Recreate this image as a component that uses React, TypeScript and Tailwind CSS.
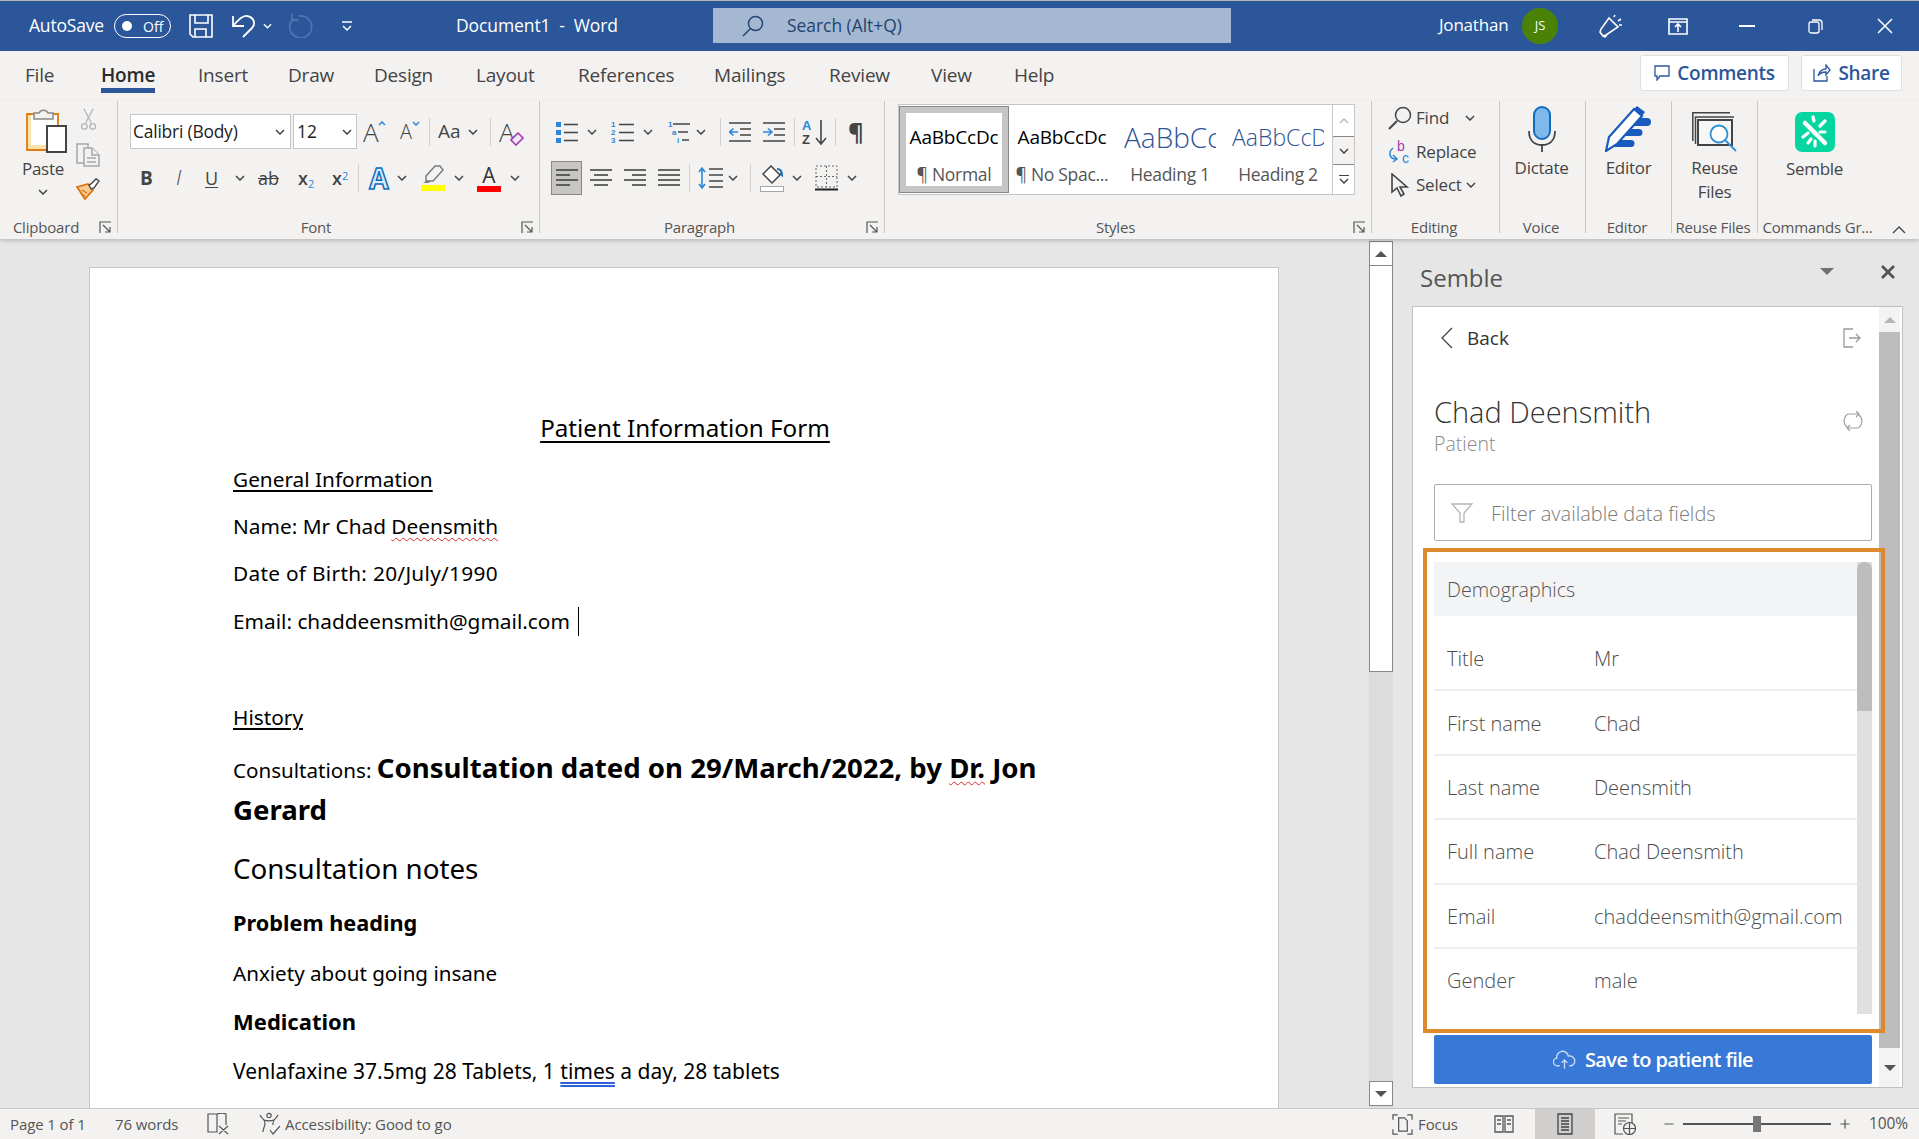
import { ReactNode } from "react"
import { Plus, Minus } from "lucide-react"

type IconProps = { className?: string }

const tabs = [
  { label: "File", w: 76 },
  { label: "Home", w: 97 },
  { label: "Insert", w: 90 },
  { label: "Draw", w: 86 },
  { label: "Design", w: 102 },
  { label: "Layout", w: 102 },
  { label: "References", w: 136 },
  { label: "Mailings", w: 115 },
  { label: "Review", w: 102 },
  { label: "View", w: 83 },
  { label: "Help", w: 60 },
]

function Chev({ className = "" }: IconProps) {
  return (
    <svg viewBox="0 0 10 6" className={`w-[10px] h-[6px] shrink-0 ${className}`} fill="none" stroke="#444" strokeWidth="1.5">
      <path d="M1 1l4 4 4-4" />
    </svg>
  )
}

function Launcher() {
  return (
    <svg viewBox="0 0 13 13" className="w-[13px] h-[13px] shrink-0" fill="none" stroke="#555" strokeWidth="1.2">
      <path d="M1 12V1h11M4 4l7 7M11 6v5H6" />
    </svg>
  )
}

function VSep({ h = 28, ml = 0 }: { h?: number; ml?: number }) {
  return <div className="w-px bg-[#d2d0ce] shrink-0" style={{ height: h, marginLeft: ml }} />
}

function AlignIcon({ widths }: { widths: string[] }) {
  return (
    <svg viewBox="0 0 22 22" className="w-[22px] h-[22px] shrink-0" stroke="#444" strokeWidth="1.6">
      {widths.map((d, i) => (
        <path key={i} d={d} />
      ))}
    </svg>
  )
}

function BulletIcon() {
  return (
    <svg viewBox="0 0 24 24" className="w-[24px] h-[24px] shrink-0" strokeWidth="1.6" stroke="#444">
      <rect x="1" y="2" width="5" height="5" fill="#2b88d8" stroke="none" />
      <rect x="1" y="10" width="5" height="5" fill="#2b88d8" stroke="none" />
      <rect x="1" y="18" width="5" height="5" fill="#2b88d8" stroke="none" />
      <path d="M9 4.500h14M9 12.500h14M9 20.500h14" />
    </svg>
  )
}

function NumberIcon() {
  return (
    <svg viewBox="0 0 25 24" className="w-[25px] h-[24px] shrink-0" strokeWidth="1.6" stroke="#444">
      <path d="M9 4.500h15M9 12.500h15M9 20.500h15" />
      <g fill="#2b88d8" stroke="none" fontSize="8" fontWeight="700" fontFamily="Liberation Sans">
        <text x="1" y="7">1</text>
        <text x="1" y="15">2</text>
        <text x="1" y="23">3</text>
      </g>
    </svg>
  )
}

function MultiIcon() {
  return (
    <svg viewBox="0 0 24 24" className="w-[24px] h-[24px] shrink-0" strokeWidth="1.6" stroke="#444">
      <path d="M6 4h17M11 12h10M15 20h7" />
      <g fill="#2b88d8" stroke="none" fontSize="8" fontWeight="700" fontFamily="Liberation Sans">
        <text x="1" y="7">1</text>
        <text x="5" y="15">a</text>
        <text x="10" y="23">i</text>
      </g>
    </svg>
  )
}

function IndentIcon({ flip = false }: { flip?: boolean }) {
  return (
    <svg viewBox="0 0 22 22" className="w-[22px] h-[22px] shrink-0" fill="none" strokeWidth="1.6" stroke="#444">
      <path d="M0 2h22M11 8h11M11 14h11M0 20h22" />
      <path d={flip ? "M0 11h8M5 7.500l4 3.500-4 3.500" : "M9 11H1M4.500 7.500l-4 3.500 4 3.500"} stroke="#2b88d8" />
    </svg>
  )
}

function SmallIcons() {
  return (
    <div className="flex flex-col items-center w-[24px] ml-[10px] pt-[6px]">
      <svg viewBox="0 0 16 24" className="w-[15px] h-[24px]" fill="none" stroke="#b5b5b5" strokeWidth="1.4">
        <path d="M3 1l8 15M13 1L5 16" />
        <circle cx="3.500" cy="20" r="3" />
        <circle cx="12.500" cy="20" r="3" />
      </svg>
      <svg viewBox="0 0 24 24" className="w-[24px] h-[24px] mt-[12px]" fill="#f3f2f1" stroke="#a6a6a6" strokeWidth="1.5">
        <path d="M1 1h11v19H1z" />
        <path d="M8 5h8l7 7v11H8z" fill="#f3f2f1" />
        <path d="M16 5v7h7M11 15h9M11 19h9" />
      </svg>
      <svg viewBox="0 0 24 22" className="w-[24px] h-[22px] mt-[11px]">
        <path d="M1 9l11-3 5 6-8 9z" fill="#f7c88f" stroke="#d9730d" strokeWidth="1.8" />
        <path d="M6 12l5 3M5 16l4 2" stroke="#d9730d" strokeWidth="1.2" />
        <path d="M13 7l2 4 3-1 5-7-3-2-5 5z" fill="#fff" stroke="#444" strokeWidth="1.4" />
      </svg>
    </div>
  )
}

function Group({ w, label, launcher, children }: { w: number; label: string; launcher?: boolean; children: ReactNode }) {
  return (
    <div className="flex flex-col shrink-0 h-[138px]" style={{ width: w }}>
      <div className="flex-1 min-h-0">{children}</div>
      <div className="flex items-center h-[20px] mb-[2px]">
        <span className={`flex-1 text-center text-[15px] leading-[20px] tracking-[-0.2px] text-[#555] whitespace-nowrap ${launcher ? "pr-[7px]" : "pr-[3px]"}`}>{label}</span>
        {launcher && (
          <div className="mr-[5px]">
            <Launcher />
          </div>
        )}
      </div>
    </div>
  )
}

function GroupSep() {
  return <div className="w-px h-[132px] bg-[#c8c6c4] shrink-0" />
}

function BigButton({ icon, label, second, mt = 4 }: { icon: ReactNode; label: string; second?: string; mt?: number }) {
  return (
    <div className="flex flex-col items-center pt-[4px]">
      <div className="h-[47px] flex items-end justify-center">{icon}</div>
      <span className="text-[17px] leading-[24px] text-[#444] tracking-[-0.3px]" style={{ marginTop: mt }}>{label}</span>
      {second && <span className="text-[17px] leading-[24px] text-[#444] tracking-[-0.3px]">{second}</span>}
    </div>
  )
}

function StyleCard({ sample, name, cls, active }: { sample: string; name: string; cls: string; active?: boolean }) {
  return (
    <div className={`w-[108px] h-[85px] flex flex-col items-center shrink-0 overflow-hidden ${active ? "border-[6px] border-[#c8c6c4] outline outline-[#8a8886]" : ""}`}>
      <div className={`w-[92px] h-[48px] flex items-center overflow-hidden whitespace-nowrap ${active ? "" : "mt-[6px]"} ${cls}`}>{sample}</div>
      <span className="mt-[1px] text-[17.500px] leading-[24px] text-[#555] whitespace-nowrap tracking-[-0.3px]">{name}</span>
    </div>
  )
}

function Row({ label, value, last }: { label: string; value: string; last?: boolean }) {
  return (
    <div className={`flex items-center h-[64.4px] pl-[13px] text-[20px] text-[#4d4d4d] whitespace-nowrap font-light ${last ? "" : "pt-[2px] border-b-2 border-[#eeeeee]"}`}>
      <span className="w-[147px]">{label}</span>
      <span>{value}</span>
    </div>
  )
}

export default function App() {
  return (
    <div className="w-[1919px] h-[1139px] overflow-hidden flex flex-col bg-[#e6e6e6] font-['Open_Sans',sans-serif] border-t border-[#b5b5b5]">
      {/* title bar */}
      <div className="h-[50px] bg-[#2b579a] flex items-center pl-[29px] text-white shrink-0">
        <span className="w-[76px] -mt-[2px] text-[17.500px] tracking-[-0.2px] whitespace-nowrap">AutoSave</span>
        <div className="ml-[9px] w-[57px] h-[24px] rounded-full border border-white flex items-center pl-[7px]">
          <div className="w-[10px] h-[10px] bg-white rounded-full" />
          <span className="ml-[11px] text-[14px]">Off</span>
        </div>
        <svg viewBox="0 0 24 24" className="ml-[18px] w-[24px] h-[24px]" fill="none" stroke="#fff" strokeWidth="1.6">
          <path d="M1 1h22v22H4l-3-3zM6 1v8h13V1M6 23v-8h11v8" />
        </svg>
        <svg viewBox="0 0 24 24" className="ml-[19px] w-[24px] h-[24px]" fill="none" stroke="#fff" strokeWidth="1.8">
          <path d="M1 2v10h11M1 12C6 6 11 1 15 2c7 1 9 8 5 12l-9 9" />
        </svg>
        <svg viewBox="0 0 10 6" className="ml-[7px] w-[9px] h-[6px]" fill="none" stroke="#fff" strokeWidth="1.5">
          <path d="M1 1l4 4 4-4" />
        </svg>
        <svg viewBox="0 0 26 24" className="ml-[15px] w-[26px] h-[24px]" fill="none" stroke="#4a76b2" strokeWidth="1.8">
          <path d="M6 5a11 11 0 1 0 6-3M5 0v6h6" />
        </svg>
        <svg viewBox="0 0 10 11" className="ml-[29px] w-[10px] h-[11px]" fill="none" stroke="#fff" strokeWidth="1.5">
          <path d="M0 1h10M1 5l4 4 4-4" />
        </svg>
        <span className="ml-[104px] -mt-[2px] w-[164px] text-[17.500px] whitespace-nowrap tracking-[-0.1px]">{"Document1\u00a0\u00a0-\u00a0\u00a0Word"}</span>
        <div className="ml-[93px] w-[518px] h-[35px] mb-[1px] bg-[#a4b8d2] flex items-center pl-[29px] text-[#23446f]">
          <svg viewBox="0 0 22 22" className="w-[22px] h-[22px]" fill="none" stroke="#23446f" strokeWidth="1.5">
            <circle cx="13.500" cy="8.500" r="7" />
            <path d="M8.500 13.500L1 21" />
          </svg>
          <span className="ml-[23px] -mt-[1px] text-[17.400px] whitespace-nowrap">{"Search (Alt+Q)"}</span>
        </div>
        <span className="ml-[208px] -mt-[2px] w-[71px] text-[17px] tracking-[-0.2px]">Jonathan</span>
        <div className="ml-[12px] w-[36px] h-[36px] rounded-full bg-[#498205] flex items-center justify-center text-[13px]">JS</div>
        <svg viewBox="0 0 24 24" className="ml-[40px] w-[24px] h-[24px]" fill="none" stroke="#fff" strokeWidth="1.6">
          <path d="M11 4l9 9-12 8-3 1-3-4 1-3zM4 21l3 2 2-2M16 3l1-2M20 7l3-2M21 11h3" />
        </svg>
        <svg viewBox="0 0 20 17" className="ml-[46px] w-[20px] h-[17px]" fill="none" stroke="#fff" strokeWidth="1.6">
          <path d="M1 1h18v15H1zM1 4h18M10 14V7M7 9l3-3 3 3" />
        </svg>
        <div className="ml-[51px] w-[16px] h-[1.500px] bg-white" />
        <svg viewBox="0 0 15 15" className="ml-[53px] w-[15px] h-[15px]" fill="none" stroke="#fff" strokeWidth="1.3">
          <rect x="1" y="3" width="10" height="11" rx="2" />
          <path d="M4 1h7a3 3 0 0 1 3 3v7" />
        </svg>
        <svg viewBox="0 0 16 16" className="ml-[54px] w-[16px] h-[16px]" fill="none" stroke="#fff" strokeWidth="1.500">
          <path d="M1 1l14 14M15 1L1 15" />
        </svg>
      </div>

      {/* tabs */}
      <div className="h-[50px] bg-[#f3f2f1] flex items-start pl-[25px] shrink-0">
        <div className="flex text-[19px] tracking-[-0.2px] text-[#444]">
          {tabs.map((t) => (
            <div key={t.label} className="flex flex-col items-start" style={{ width: t.w }}>
              <div className="inline-flex flex-col">
                <span className={`pt-[11px] leading-[26px] whitespace-nowrap ${t.label === "Home" ? "font-semibold text-[#2b2b2b]" : ""}`}>{t.label}</span>
                {t.label === "Home" && <div className="h-[5px] bg-[#2b579a]" />}
              </div>
            </div>
          ))}
        </div>
        <div className="ml-auto mr-[17px] mt-[4px] flex gap-[12px] text-[19px] font-semibold text-[#2b579a]">
          <div className="w-[149px] h-[36px] bg-white border border-[#e1dfdd] rounded-[3px] flex items-center justify-center gap-[7px]">
            <svg viewBox="0 0 16 16" className="w-[16px] h-[16px]" fill="none" stroke="#2b579a" strokeWidth="1.3">
              <path d="M1 1h14v10H6l-3 4v-4H1z" />
            </svg>
            <span className="tracking-[-0.3px]">Comments</span>
          </div>
          <div className="w-[101px] h-[36px] bg-white border border-[#e1dfdd] rounded-[3px] flex items-center justify-center gap-[7px]">
            <svg viewBox="0 0 18 18" className="w-[18px] h-[18px]" fill="none" stroke="#2b579a" strokeWidth="1.3">
              <path d="M1 5v12h13v-5M5 12c1-5 5-7 8-7V1l4 5-4 5V8c-3 0-6 1-8 4z" />
            </svg>
            <span className="tracking-[-0.3px]">Share</span>
          </div>
        </div>
      </div>

      {/* ribbon */}
      <div className="h-[138px] bg-[#f3f2f1] flex shrink-0 shadow-[0_2px_4px_rgba(0,0,0,0.18)] z-10 relative">
        <Group w={117} label="Clipboard" launcher>
          <div className="flex pl-[26px]">
            <div className="flex flex-col items-center w-[40px]">
              <svg viewBox="0 0 41 47" className="w-[41px] h-[47px] mt-[6px] shrink-0">
                <path d="M1 7h31v36H1z" fill="#fbe3a8" stroke="#e07b10" strokeWidth="1.8" />
                <path d="M5 8h26v30H5z" fill="#fff" />
                <path d="M8 12V6h5a5 5 0 0 1 9 0h5v6z" fill="#f3f2f1" stroke="#8a8886" strokeWidth="1.500" />
                <path d="M21 19h19v26H21z" fill="#fff" stroke="#444" strokeWidth="2" />
              </svg>
              <span className="-ml-[6px] text-[17px] leading-[24px] text-[#444] tracking-[-0.3px] mt-[3px]">Paste</span>
              <Chev className="-ml-[6px] mt-[8px]" />
            </div>
            <SmallIcons />
          </div>
        </Group>
        <GroupSep />
        <Group w={421} label="Font" launcher>
          <div className="flex items-center mt-[13px] h-[35px]">
            <div className="ml-[12px] w-[161px] h-[35px] bg-white border border-[#c8c6c4] flex items-center px-[2px]">
              <span className="text-[17.400px] text-[#222] tracking-[-0.2px] flex-1 whitespace-nowrap">{"Calibri (Body)"}</span>
              <Chev className="mr-[3px]" />
            </div>
            <div className="ml-[2px] w-[64px] h-[35px] bg-white border border-[#c8c6c4] flex items-center pl-[3px]">
              <span className="text-[17.400px] text-[#222] flex-1">12</span>
              <Chev className="mr-[4px]" />
            </div>
            <div className="ml-[6px] w-[26px] flex items-start text-[#444]">
              <span className="text-[26px] leading-[28px] font-light">A</span>
              <svg viewBox="0 0 8 5" className="w-[8px] h-[5px] mt-[3px] -ml-[1px]" fill="none" stroke="#2b88d8" strokeWidth="1.5"><path d="M1 4l3-3 3 3" /></svg>
            </div>
            <div className="ml-[11px] w-[22px] flex items-start text-[#444]">
              <span className="text-[20px] leading-[28px] font-light">A</span>
              <svg viewBox="0 0 8 5" className="w-[8px] h-[5px] mt-[3px]" fill="none" stroke="#2b88d8" strokeWidth="1.5"><path d="M1 1l3 3 3-3" /></svg>
            </div>
            <VSep ml={7} />
            <span className="ml-[8px] w-[28px] text-[19px] text-[#444]">Aa</span>
            <Chev className="ml-[2px]" />
            <VSep ml={12} />
            <div className="ml-[8px] w-[28px] flex items-end relative">
              <span className="text-[26px] leading-[28px] text-[#444] font-light">A</span>
              <svg viewBox="0 0 14 14" className="w-[14px] h-[14px] -ml-[5px]" fill="#f3e8f5" stroke="#a33eaf" strokeWidth="1.6"><path d="M8 1l5 5-7 7-5-5z" /></svg>
            </div>
          </div>
          <div className="flex items-center mt-[12px] h-[34px] text-[#444]">
            <span className="ml-[22px] w-[12px] text-[19px] font-bold">B</span>
            <span className="ml-[24px] w-[10px] text-[21px] italic font-light">I</span>
            <span className="ml-[19px] w-[15px] text-[18px] underline underline-offset-2">U</span>
            <Chev className="ml-[15px]" />
            <span className="ml-[13px] w-[24px] text-[18px] line-through">ab</span>
            <span className="ml-[16px] w-[17px] text-[18px] font-semibold leading-[20px]">x<sub className="text-[11px] text-[#2b88d8] font-normal">2</sub></span>
            <span className="ml-[17px] w-[18px] text-[18px] font-semibold leading-[20px]">x<sup className="text-[11px] text-[#2b88d8] font-normal">2</sup></span>
            <VSep ml={8} />
            <span className="ml-[7px] w-[26px] text-center text-[28px] leading-[32px] font-bold text-[#d7ecfb] [-webkit-text-stroke:1.5px_#0f6cbd]">A</span>
            <Chev className="ml-[5px]" />
            <div className="ml-[13px] w-[25px] flex flex-col items-center">
              <svg viewBox="0 0 22 20" className="w-[22px] h-[20px]">
                <path d="M4 16l-3 2h6l1-2z" fill="#888" />
                <path d="M4 16V11L13 1h5l3 4-10 11z" fill="#f3f2f1" stroke="#777" strokeWidth="1.4" />
              </svg>
              <div className="w-[24px] h-[6px] bg-[#ffff00]" />
            </div>
            <Chev className="ml-[9px]" />
            <div className="ml-[13px] w-[24px] flex flex-col items-center">
              <span className="text-[21px] leading-[21px] text-[#333]">A</span>
              <div className="w-[24px] h-[6px] bg-[#ff0000]" />
            </div>
            <Chev className="ml-[9px]" />
          </div>
        </Group>
        <GroupSep />
        <Group w={344} label="Paragraph" launcher>
          <div className="flex items-center mt-[13px] h-[35px]">
            <div className="ml-[15px]"><BulletIcon /></div>
            <Chev className="ml-[8px]" />
            <div className="ml-[13px]"><NumberIcon /></div>
            <Chev className="ml-[8px]" />
            <div className="ml-[14px]"><MultiIcon /></div>
            <Chev className="ml-[5px]" />
            <VSep ml={14} />
            <div className="ml-[8px]"><IndentIcon /></div>
            <div className="ml-[12px]"><IndentIcon flip /></div>
            <VSep ml={9} />
            <svg viewBox="0 0 26 28" className="ml-[7px] w-[26px] h-[28px]" fill="none">
              <g fontFamily="Liberation Sans" fontWeight="700" fontSize="13" stroke="none">
                <text x="0" y="12" fill="#2b88d8">A</text>
                <text x="0" y="26" fill="#444">Z</text>
              </g>
              <path d="M19 2v24M14 20l5 6 5-6" stroke="#444" strokeWidth="1.6" />
            </svg>
            <VSep ml={7} />
            <span className="ml-[12px] text-[24px] leading-[28px] font-bold text-[#444]">¶</span>
          </div>
          <div className="flex items-center mt-[12px] h-[34px]">
            <div className="ml-[11px] w-[31px] h-[34px] bg-[#c8c6c4] border border-[#8a8886] flex items-center justify-center">
              <AlignIcon widths={["M0 3h22", "M0 8h14", "M0 13h22", "M0 18h14"]} />
            </div>
            <div className="ml-[8px]"><AlignIcon widths={["M0 3h22", "M4 8h14", "M0 13h22", "M4 18h14"]} /></div>
            <div className="ml-[12px]"><AlignIcon widths={["M0 3h22", "M8 8h14", "M0 13h22", "M8 18h14"]} /></div>
            <div className="ml-[12px]"><AlignIcon widths={["M0 3h22", "M0 8h22", "M0 13h22", "M0 18h22"]} /></div>
            <VSep ml={9} />
            <svg viewBox="0 0 25 24" className="ml-[8px] w-[25px] h-[24px]" fill="none" strokeWidth="1.6">
              <path d="M4 2v20M1 6l3-4 3 4M1 18l3 4 3-4" stroke="#2b88d8" />
              <path d="M11 3h14M11 9h14M11 15h14M11 21h14" stroke="#444" />
            </svg>
            <Chev className="ml-[5px]" />
            <VSep ml={12} />
            <div className="ml-[9px] flex flex-col items-center w-[24px]">
              <svg viewBox="0 0 24 21" className="w-[24px] h-[21px]" fill="none">
                <path d="M11 1l9 9-8 8-9-9z" stroke="#444" strokeWidth="1.5" fill="#fff" />
                <path d="M17 4c3 0 5 2 5 6l-2-2" stroke="#1a6fb5" strokeWidth="2" />
              </svg>
              <div className="w-[24px] h-[6px] bg-white border border-[#a6a6a6]" />
            </div>
            <Chev className="ml-[8px]" />
            <svg viewBox="0 0 23 26" className="ml-[13px] w-[23px] h-[26px]" fill="none">
              <path d="M1 1h21v21H1zM11.500 1v21M1 11.500h21" stroke="#666" strokeWidth="1" strokeDasharray="2 2" />
              <path d="M0 24.500h23" stroke="#222" strokeWidth="2" />
            </svg>
            <Chev className="ml-[9px]" />
          </div>
        </Group>
        <GroupSep />
        <Group w={486} label="Styles" launcher>
          <div className="ml-[13px] mt-[3px] w-[457px] h-[91px] bg-white border border-[#c8c6c4] flex overflow-hidden">
            <div className="flex flex-1 items-center pl-[1px]">
              <StyleCard active sample="AaBbCcDc" name="¶ Normal" cls="text-[19px] tracking-[-0.2px] text-black justify-center" />
              <StyleCard sample="AaBbCcDc" name="¶ No Spac..." cls="text-[19px] tracking-[-0.2px] text-black justify-center" />
              <StyleCard sample="AaBbCc" name="Heading 1" cls="text-[28px] text-[#2f5496] font-light" />
              <StyleCard sample="AaBbCcD" name="Heading 2" cls="text-[23px] text-[#2f5496] font-light" />
            </div>
            <div className="w-[22px] flex flex-col border-l border-[#c8c6c4] shrink-0">
              <div className="h-[31px] flex items-center justify-center">
                <svg viewBox="0 0 10 6" className="w-[10px] h-[6px]" fill="none" stroke="#bbb" strokeWidth="1.5"><path d="M1 5l4-4 4 4" /></svg>
              </div>
              <div className="h-[29px] flex items-center justify-center border-y border-[#8a8886] bg-[#f3f2f1]"><Chev /></div>
              <div className="flex-1 flex flex-col items-center justify-center gap-[2px]">
                <div className="w-[10px] h-[1.500px] bg-[#444]" />
                <Chev />
              </div>
            </div>
          </div>
        </Group>
        <GroupSep />
        <Group w={127} label="Editing">
          <div className="flex flex-col pl-[16px] text-[17px] text-[#444] tracking-[-0.2px]">
            <div className="flex items-center h-[34px]">
              <svg viewBox="0 0 24 24" className="w-[24px] h-[24px]" fill="none" stroke="#444" strokeWidth="1.5">
                <circle cx="15" cy="9" r="7.500" />
                <path d="M9 15l-8 8" strokeWidth="2" />
              </svg>
              <span className="ml-[4px] w-[49px]">Find</span>
              <Chev />
            </div>
            <div className="flex items-center h-[34px]">
              <svg viewBox="0 0 24 24" className="w-[24px] h-[24px]" fill="none">
                <g fontFamily="Liberation Sans" fontSize="14" stroke="none">
                  <text x="9" y="11" fill="#a33eaf">b</text>
                  <text x="14" y="23" fill="#2b88d8">c</text>
                </g>
                <path d="M5 8c-5 4-4 11 3 11M5 15l4 4-4 3" stroke="#2b88d8" strokeWidth="1.5" />
              </svg>
              <span className="ml-[4px]">Replace</span>
            </div>
            <div className="flex items-center h-[32px]">
              <svg viewBox="0 0 20 24" className="w-[20px] h-[24px] ml-[2px]" fill="#f3f2f1" stroke="#444" strokeWidth="1.6">
                <path d="M2 1v18l5-4 4 8 3-2-4-7h7z" />
              </svg>
              <span className="ml-[6px] w-[52px]">Select</span>
              <Chev className="-ml-[2px]" />
            </div>
          </div>
        </Group>
        <GroupSep />
        <Group w={85} label="Voice">
          <div className="pr-[2px]">
            <BigButton
              label="Dictate"
              icon={
                <svg viewBox="0 0 28 46" className="w-[28px] h-[46px]" fill="none">
                  <rect x="6" y="1" width="16" height="32" rx="8" fill="#7fb9ec" stroke="#0f6cbd" strokeWidth="2" />
                  <path d="M1 25c0 10 6 14 13 14s13-4 13-14M14 39v7" stroke="#444" strokeWidth="1.8" />
                </svg>
              }
            />
          </div>
        </Group>
        <GroupSep />
        <Group w={85} label="Editor">
          <BigButton
            label="Editor"
            icon={
              <svg viewBox="0 0 47 46" className="w-[47px] h-[46px]" fill="none">
                <path d="M26 12h16a4 4 0 0 1 0 8H22zM20 23h14a3.500 3.500 0 0 1 0 7H14zM13 34h13a3.500 3.500 0 0 1 0 7H8z" fill="#185abd" />
                <path d="M1 45l3-14L29 3l8 7-25 28z" fill="#fff" stroke="#185abd" strokeWidth="2.200" />
                <path d="M29 3l3-3 8 6-3 4z" fill="#185abd" />
              </svg>
            }
          />
        </Group>
        <GroupSep />
        <Group w={85} label="Reuse Files">
          <BigButton
            label="Reuse"
            second="Files"
            icon={
              <svg viewBox="0 0 46 40" className="w-[46px] h-[40px]" fill="none">
                <path d="M38 0.800H0.800V29" stroke="#444" strokeWidth="1.500" />
                <path d="M42 5H3.500v27" stroke="#444" strokeWidth="1.500" />
                <path d="M6 8h34v25H6z" fill="#f6f6f6" stroke="#444" strokeWidth="2" />
                <circle cx="27" cy="22" r="8.500" stroke="#2e90d8" strokeWidth="1.800" fill="#fff" />
                <path d="M33 28l11 11" stroke="#2e90d8" strokeWidth="1.800" />
              </svg>
            }
          />
        </Group>
        <GroupSep />
        <Group w={122} label="Commands Gr...">
          <div className="pr-[9px]">
            <BigButton
              label="Semble"
              mt={5}
              icon={
                <svg viewBox="0 0 40 40" className="w-[40px] h-[40px]">
                  <rect width="40" height="40" rx="7" fill="#05d6a0" />
                  <path d="M10 11l20 20" stroke="#fff" strokeWidth="4.500" strokeLinecap="round" />
                  <path d="M25 14l5-5M18 5l1 4M25 20h5M8 25l5-4M13 31l3-4M20 29v5" stroke="#fff" strokeWidth="3.200" strokeLinecap="round" />
                </svg>
              }
            />
          </div>
        </Group>
        <div className="flex-1 flex items-end justify-center pb-[5px] pr-[2px]">
          <svg viewBox="0 0 14 8" className="w-[14px] h-[8px]" fill="none" stroke="#444" strokeWidth="1.4"><path d="M1 7l6-6 6 6" /></svg>
        </div>
      </div>

      {/* main */}
      <div className="flex-1 min-h-0 flex">
        <div className="w-[1369px] overflow-hidden pl-[89px] pt-[28px] shrink-0">
          <div className="w-[1190px] h-[900px] bg-white border border-[#c8c6c4] pl-[143px] pt-[145px] text-black font-['Noto_Sans',sans-serif] text-[20.800px] leading-[30px]">
            <p className="w-[904px] text-center text-[24.200px] underline underline-offset-[4px]">Patient Information Form</p>
            <p className="mt-[21px] underline underline-offset-[3px]">General Information</p>
            <p className="mt-[17px]">Name: Mr Chad <span className="underline decoration-wavy decoration-[#d92b2b] decoration-1 underline-offset-[3px]">Deensmith</span></p>
            <p className="mt-[17px] tracking-[0.3px]">Date of Birth: 20/July/1990</p>
            <p className="mt-[18px] flex items-center whitespace-pre">Email: chaddeensmith@gmail.com <span className="ml-[3px] w-px h-[29px] bg-black" /></p>
            <p className="mt-[66px] underline underline-offset-[3px]">History</p>
            <p className="mt-[16px] w-[860px] font-bold text-[27.600px] leading-[39px]"><span className="font-normal text-[20.600px]">Consultations: </span>Consultation dated on 29/March/2022, by <span className="underline decoration-wavy decoration-[#d92b2b] decoration-1 underline-offset-[3px]">Dr.</span> Jon Gerard</p>
            <p className="mt-[19px] text-[27.700px] leading-[40px]">Consultation notes</p>
            <p className="mt-[20px] font-bold text-[21.700px]">Problem heading</p>
            <p className="mt-[20px] text-[20.600px]">Anxiety about going insane</p>
            <p className="mt-[18px] font-bold text-[22px]">Medication</p>
            <p className="mt-[20px] text-[21px]">Venlafaxine 37.5mg 28 Tablets, 1 <span className="underline decoration-double decoration-[#2f62d6] underline-offset-[3px]">times</span> a day, 28 tablets</p>
          </div>
        </div>

        {/* doc scrollbar */}
        <div className="w-[24px] shrink-0 flex flex-col pt-[2px] pb-[2px] bg-[#dcdcdc]">
          <div className="h-[25px] bg-white border border-[#8a8886] flex items-center justify-center shrink-0">
            <div className="w-0 h-0 border-x-[6px] border-x-transparent border-b-[6px] border-b-[#555]" />
          </div>
          <div className="h-[406px] bg-white border-x border-b border-[#8a8886] shrink-0" />
          <div className="flex-1" />
          <div className="h-[25px] bg-white border border-[#8a8886] flex items-center justify-center shrink-0">
            <div className="w-0 h-0 border-x-[6px] border-x-transparent border-t-[6px] border-t-[#555]" />
          </div>
        </div>

        {/* task pane */}
        <div className="flex-1 min-w-0 flex flex-col pl-[19px] pr-[16px]">
          <div className="h-[67px] flex items-center shrink-0">
            <span className="ml-[8px] text-[24px] text-[#555] mt-[10px]">Semble</span>
            <div className="ml-auto mr-[47px] -mt-[2px] w-0 h-0 border-x-[7px] border-x-transparent border-t-[7px] border-t-[#707070]" />
            <svg viewBox="0 0 14 14" className="mr-[8px] -mt-[2px] w-[14px] h-[14px]" fill="none" stroke="#555" strokeWidth="2.800"><path d="M1 1l12 12M13 1L1 13" /></svg>
          </div>
          <div className="relative h-[782px] bg-white border border-[#c0c0c0] flex">
            <div className="w-[466px] shrink-0 flex flex-col">
              <div className="h-[62px] flex items-center pl-[27px] pr-[18px] text-[#444]">
                <svg viewBox="0 0 13 22" className="w-[13px] h-[22px]" fill="none" stroke="#444" strokeWidth="1.3">
                  <path d="M12 1L2 11l10 10" />
                </svg>
                <span className="ml-[14px] text-[19px] text-[#333]">Back</span>
                <svg viewBox="0 0 18 20" className="ml-auto w-[18px] h-[20px]" fill="none" stroke="#999" strokeWidth="1.3">
                  <path d="M10 1H1v18h9M6 10h11M13 6l4 4-4 4" />
                </svg>
              </div>
              <div className="mt-[25px] pl-[21px] pr-[15px] flex items-center">
                <div className="flex flex-col flex-1">
                  <span className="text-[29px] leading-[36px] text-[#333] font-light">Chad Deensmith</span>
                  <span className="mt-[2px] text-[19.500px] leading-[24px] text-[#8a8a8a] font-light">Patient</span>
                </div>
                <svg viewBox="0 0 22 20" className="w-[22px] h-[20px] mb-[9px]" fill="none" stroke="#a0a0a0" strokeWidth="1.200">
                  <path d="M5 16A8 8 0 0 1 6 3h11M14 0l3 3-3 3M17 4a8 8 0 0 1-1 13H5M8 14l-3 3 3 3" />
                </svg>
              </div>
              <div className="ml-[21px] mt-[28px] w-[438px] h-[57px] border border-[#ababab] rounded-[2px] flex items-center pl-[16px] shrink-0">
                <svg viewBox="0 0 22 20" className="w-[22px] h-[20px]" fill="none" stroke="#b5b5b5" strokeWidth="1.300">
                  <path d="M1 1h20l-8 9v9H9v-9z" />
                </svg>
                <span className="ml-[18px] mt-[2px] text-[20px] text-[#7a7a7a] font-light">Filter available data fields</span>
              </div>
              <div className="ml-[21px] mt-[21px] w-[438px] h-[452px] flex shrink-0">
                <div className="w-[423px] shrink-0">
                  <div className="h-[54px] bg-[#f3f4f6] flex items-center pl-[13px] pt-[2px] text-[19.700px] text-[#555] font-light">Demographics</div>
                  <div className="mt-[11px]">
                    <Row label="Title" value="Mr" />
                    <Row label="First name" value="Chad" />
                    <Row label="Last name" value="Deensmith" />
                    <Row label="Full name" value="Chad Deensmith" />
                    <Row label="Email" value="chaddeensmith@gmail.com" />
                    <Row label="Gender" value="male" last />
                  </div>
                </div>
                <div className="w-[15px] bg-[#e0e0e0] shrink-0">
                  <div className="h-[149px] bg-[#bdbdbd] rounded-t-[7px]" />
                </div>
              </div>
              <div className="ml-[21px] mt-[21px] w-[438px] h-[49px] bg-[#3878d6] rounded-[2px] flex items-center justify-center shrink-0 text-white">
                <svg viewBox="0 0 24 20" className="w-[23px] h-[20px]" fill="none" stroke="#c9ddf6" strokeWidth="1.4">
                  <path d="M7 16H5a4 4 0 0 1-1-8 6 6 0 0 1 12-2 5 5 0 0 1 3 10h-2M12 19v-9M9 13l3-3 3 3" />
                </svg>
                <span className="ml-[9px] text-[20px] font-semibold tracking-[-0.6px]">Save to patient file</span>
              </div>
            </div>
            <div className="w-[21px] bg-[#f3f3f3] shrink-0 flex flex-col items-center">
              <div className="h-[25px] flex items-center justify-center">
                <div className="w-0 h-0 border-x-[6px] border-x-transparent border-b-[6px] border-b-[#b5b5b5]" />
              </div>
              <div className="w-full h-[716px] bg-[#bdbdbd]" />
              <div className="flex-1 flex items-center justify-center">
                <div className="w-0 h-0 border-x-[6px] border-x-transparent border-t-[6px] border-t-[#555]" />
              </div>
            </div>
            <div className="absolute left-[10px] top-[241px] w-[462px] h-[485px] border-[4px] border-[#de8a2c] pointer-events-none" />
          </div>
        </div>
      </div>

      {/* status bar */}
      <div className="h-[31px] bg-[#f3f2f1] border-t border-[#c8c6c4] flex items-center pl-[10px] text-[15px] tracking-[-0.1px] text-[#555] shrink-0">
        <span className="w-[105px] whitespace-nowrap">Page 1 of 1</span>
        <span className="w-[92px] whitespace-nowrap">76 words</span>
        <svg viewBox="0 0 23 22" className="w-[23px] h-[22px]" fill="none" stroke="#555" strokeWidth="1.2">
          <path d="M10 19H1V1h9zM10 1c3-1 7-1 9 0v11M10 7v6M12 13l9 8M21 13l-9 8" />
        </svg>
        <svg viewBox="0 0 24 24" className="ml-[29px] w-[24px] h-[24px]" fill="none" stroke="#555" strokeWidth="1.2">
          <circle cx="10" cy="3.500" r="2.200" />
          <path d="M1 3c1 3 5 4 5 8 0 4-2 5-2 9M19 3c-1 3-5 4-5 8v2M5 8c3 1 7 1 10 0M11 18l3 4 7-8" />
        </svg>
        <span className="ml-[2px] whitespace-nowrap">Accessibility: Good to go</span>
        <div className="ml-auto flex items-center h-full">
          <svg viewBox="0 0 22 22" className="w-[21px] h-[21px]" fill="none" stroke="#555" strokeWidth="1.3">
            <path d="M1 6V1h5M16 1h5v5M1 16v5h5M16 21h5v-5M7 4h6l3 3v11H7z" />
          </svg>
          <span className="ml-[5px] w-[76px]">Focus</span>
          <svg viewBox="0 0 20 20" className="w-[20px] h-[20px]" fill="none" stroke="#555" strokeWidth="1.3">
            <path d="M1 2h8v16H1zM11 2h8v16h-8zM3 6h4M3 10h4M13 6h4M13 10h4" />
          </svg>
          <div className="ml-[21px] w-[60px] h-full bg-[#d0cfcd] flex items-center justify-center">
            <svg viewBox="0 0 16 22" className="w-[16px] h-[22px]" fill="none" stroke="#444" strokeWidth="1.3">
              <path d="M1 1h14v20H1zM4 5h8M4 8h8M4 11h8M4 14h8M4 17h8" />
            </svg>
          </div>
          <svg viewBox="0 0 22 22" className="ml-[19px] w-[22px] h-[22px]" fill="none" stroke="#555" strokeWidth="1.2">
            <path d="M9 21H1V1h17v9M4 5h11M4 8h8M4 11h4" />
            <circle cx="15.500" cy="15.500" r="6" />
            <path d="M9.500 15.500h12M15.500 9.500v12" />
          </svg>
          <Minus className="ml-[26px] w-[14px] h-[14px] text-[#555]" />
          <div className="ml-[7px] w-[148px] h-[2px] bg-[#555] relative">
            <div className="absolute left-[70px] -top-[7px] w-[8px] h-[16px] bg-[#777]" />
          </div>
          <Plus className="ml-[7px] w-[14px] h-[14px] text-[#555]" />
          <span className="ml-[17px] mr-[11px] text-[15.500px]">100%</span>
        </div>
      </div>
    </div>
  )
}
